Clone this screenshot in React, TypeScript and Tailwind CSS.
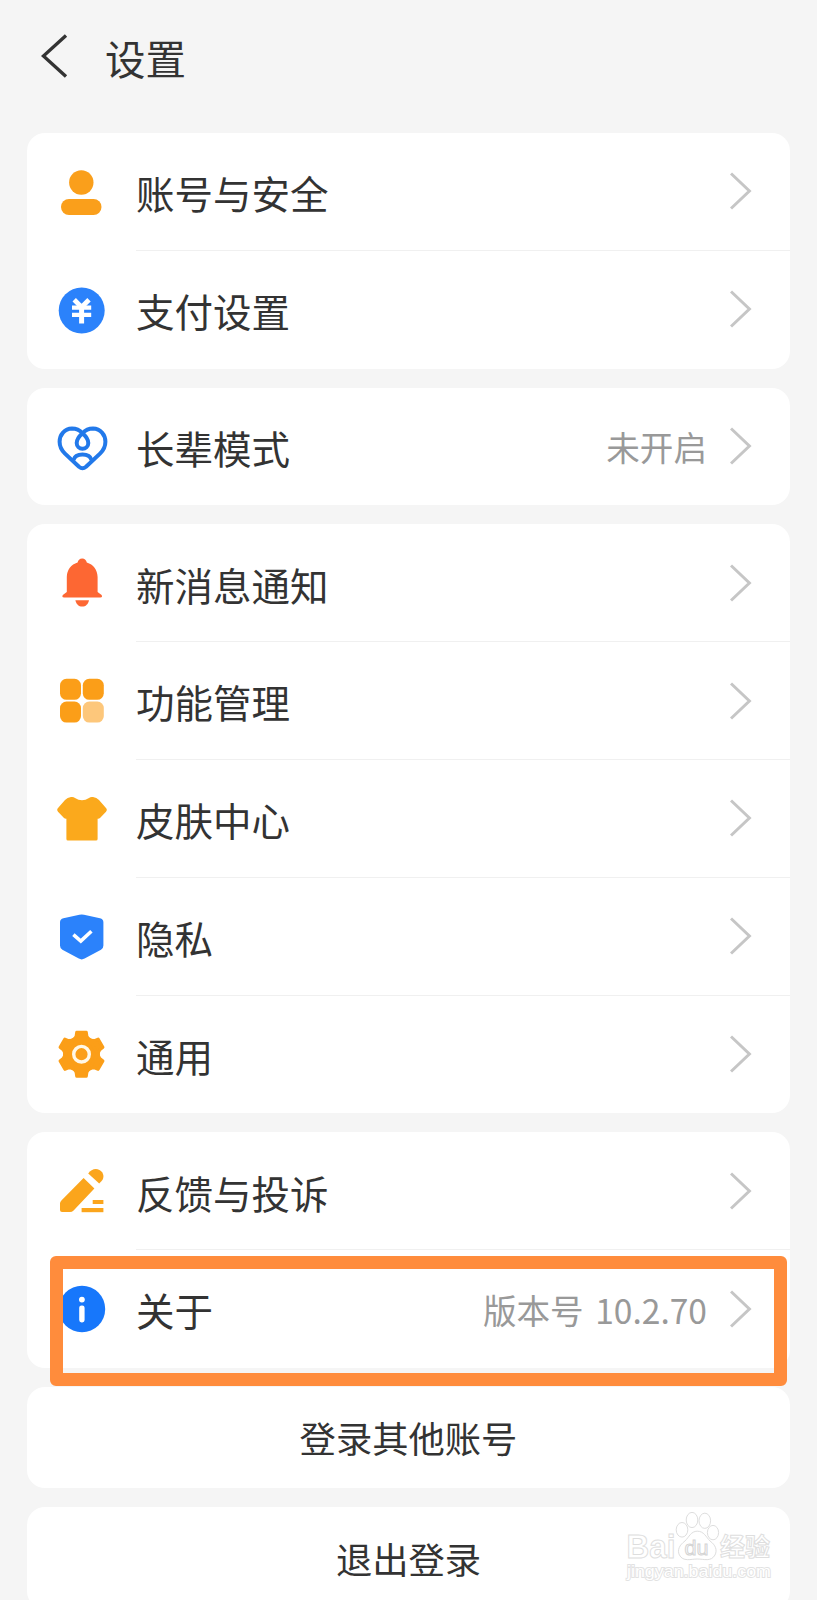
import type { ReactNode } from 'react'

interface SettingItem {
  label: string
  icon: ReactNode
  value?: string
}

function Icon({ children }: { children: ReactNode }) {
  return (
    <svg className="w-14 h-14 shrink-0" viewBox="0 0 56 56" fill="none">
      {children}
    </svg>
  )
}

const UserIcon = (
  <Icon>
    <g fill="#fa9f1b">
      <circle cx="27.3" cy="18.5" r="12.2" />
      <rect x="7" y="35" width="40.5" height="16" rx="8" />
    </g>
  </Icon>
)

const PayIcon = (
  <Icon>
    <circle cx="27.7" cy="28.5" r="23" fill="#2b82fb" />
    <path d="M20.2 17.8 L27.6 25.2 L35 17.8" stroke="#fff" strokeWidth="4.8" />
    <path d="M18 25.6 H37.2 M18 32.8 H37.2" stroke="#fff" strokeWidth="4.2" />
    <path d="M27.6 24 V41.5" stroke="#fff" strokeWidth="5" />
  </Icon>
)

const HeartIcon = (
  <Icon>
    <g stroke="#2279ea" strokeWidth="4" strokeLinejoin="round">
      <path d="M28.5 15.3 C25 11.5 21.5 10.6 18 10.6 C10.5 10.8 5.6 16.6 5.6 23.8 C5.6 28.6 7.6 32.4 11 35.6 L25 48.8 Q28.5 51.6 32 48.8 L46 35.6 C49.4 32.4 51.4 28.6 51.4 23.8 C51.4 16.6 46.5 10.8 39 10.6 C35.5 10.6 32 11.5 28.5 15.3" />
      <path d="M28.5 15.3 C32.2 18.6 34.3 22 34.3 25 A5.8 5.8 0 0 1 22.7 25 C22.7 22 24.8 18.6 28.5 15.3 Z" />
      <path d="M19.5 42 C21.5 34.8 35.5 34.8 37.5 42" />
    </g>
  </Icon>
)

const BellIcon = (
  <Icon>
    <g fill="#fd6733">
      <path d="M28.2 3.5 C30.8 3.5 32.4 5.2 32.8 7.6 C39.4 9.6 43.4 15 43.6 22 V37 L47.6 40 Q48.8 42.5 46.4 42.5 H10 Q7.6 42.5 8.8 40 L12.8 37 V22 C13 15 17 9.6 23.6 7.6 C24 5.2 25.6 3.5 28.2 3.5 Z" />
      <path d="M21.4 45.2 H35 C34.4 49 31.6 51.6 28.2 51.6 C24.8 51.6 22 49 21.4 45.2 Z" />
    </g>
  </Icon>
)

const GridIcon = (
  <Icon>
    <g fill="#fb9e18">
      <rect x="6" y="5.8" width="21" height="21" rx="6.5" />
      <rect x="28.8" y="5.8" width="21" height="21" rx="6.5" />
      <rect x="6" y="28.6" width="21" height="21" rx="6.5" />
      <rect x="28.8" y="28.6" width="21" height="21" rx="6.5" fill="#fdc77b" />
    </g>
  </Icon>
)

const ShirtIcon = (
  <Icon>
    <path
      d="M17 6 Q19.5 5.6 21 7 Q28 11.6 35 7 Q36.5 5.6 39 6 Q42.6 6.4 45 9 L52.4 17.6 Q53.6 19.2 52 20.8 L46 27 Q45 28 43.6 27.8 V48 Q43.6 49.5 42 49.5 H14 Q12.4 49.5 12.4 48 V27.8 Q11 28 10 27 L4 20.8 Q2.4 19.2 3.6 17.6 L11 9 Q13.4 6.4 17 6 Z"
      fill="#fba91c"
    />
  </Icon>
)

const ShieldIcon = (
  <Icon>
    <path
      d="M25.4 5.8 Q27.7 5 30 5.8 L46 9.2 Q49.4 10 49.4 13.2 V36.4 Q49.4 39.2 47 40.8 L30.6 49.6 Q27.7 51.2 24.8 49.6 L8.4 40.8 Q6 39.2 6 36.4 V13.2 Q6 10 9.4 9.2 Z"
      fill="#2b82fb"
    />
    <path d="M19.4 25.6 L26.8 32 L37.4 22.2" stroke="#fff" strokeWidth="3.6" />
  </Icon>
)

const GearIcon = (
  <Icon>
    <g transform="translate(27.5 28.2)">
      <g fill="#fb9e18" stroke="#fb9e18" strokeWidth="3" strokeLinejoin="round">
        <circle r="17" />
        {[0, 60, 120, 180, 240, 300].map((angle) => (
          <path key={angle} d="M-8 -14 L-5.4 -18 L-4.8 -22 H4.8 L5.4 -18 L8 -14 Z" transform={`rotate(${angle})`} />
        ))}
      </g>
      <circle r="7.8" stroke="#fff8e8" strokeWidth="3.4" />
    </g>
  </Icon>
)

const PencilIcon = (
  <Icon>
    <g fill="#fba51c">
      <path d="M29.6 15 L40.4 25.4 L19.6 47.4 Q18 49 16 49 H8 Q6 49 6 47 V40.6 Q6 38.8 7.4 37.4 Z" />
      <path d="M34.2 10.4 C37 6.6 41.4 4.8 45.4 7 C50 9.6 50.6 14.6 47.6 18 L45.2 20.6 Z" />
      <rect x="38.7" y="37" width="10.7" height="4" />
      <rect x="27.6" y="45" width="21.8" height="4.2" />
    </g>
  </Icon>
)

const InfoIcon = (
  <Icon>
    <circle cx="28" cy="28" r="23.2" fill="#1777fb" />
    <circle cx="27.9" cy="18.6" r="2.9" fill="#fff" />
    <rect x="25.2" y="24.4" width="5.4" height="17" rx="2.4" fill="#fff" />
  </Icon>
)

const groups: SettingItem[][] = [
  [
    { label: '账号与安全', icon: UserIcon },
    { label: '支付设置', icon: PayIcon },
  ],
  [{ label: '长辈模式', icon: HeartIcon, value: '未开启' }],
  [
    { label: '新消息通知', icon: BellIcon },
    { label: '功能管理', icon: GridIcon },
    { label: '皮肤中心', icon: ShirtIcon },
    { label: '隐私', icon: ShieldIcon },
    { label: '通用', icon: GearIcon },
  ],
  [
    { label: '反馈与投诉', icon: PencilIcon },
    { label: '关于', icon: InfoIcon, value: '版本号 10.2.70' },
  ],
]

function SettingRow({ item, last }: { item: SettingItem; last: boolean }) {
  return (
    <div className="flex items-center h-[117.8px] pl-[27px]">
      {item.icon}
      <div
        className={`flex flex-1 items-center h-full ml-[26px] pr-[38px] border-b ${
          last ? 'border-transparent' : 'border-[#f0f0f0]'
        }`}
      >
        <span className="flex-1 pt-0.5 text-[38.5px] leading-none text-[#333]">{item.label}</span>
        {item.value && (
          <span className="pt-0.5 text-[33.6px] leading-none [word-spacing:4px] text-[#999]">{item.value}</span>
        )}
        <svg className="w-[22px] h-[38px] ml-[23px] shrink-0" viewBox="0 0 22 38" fill="none">
          <path d="M1 1.5 L19.4 19 L1 36.5" stroke="#c6c6c6" strokeWidth="3" />
        </svg>
      </div>
    </div>
  )
}

function Watermark() {
  return (
    <svg
      className="absolute left-[620px] top-[1505px] w-[160px] h-[84px]"
      viewBox="0 0 160 84"
      fill="#fff"
      stroke="#dedede"
      strokeWidth="1"
    >
      <text x="6.5" y="53" fontSize="34" fontWeight="700" textLength="49" lengthAdjust="spacingAndGlyphs" fontFamily="Liberation Sans, sans-serif">
        Bai
      </text>
      <ellipse cx="62" cy="24.8" rx="5.8" ry="7.3" />
      <ellipse cx="72" cy="15" rx="5.8" ry="7.6" />
      <ellipse cx="84.8" cy="15.8" rx="5.8" ry="7.6" />
      <ellipse cx="93" cy="27.6" rx="5.6" ry="7.2" />
      <path d="M77.3 26.2 C84 26.2 86 32 90 36 C95.5 40 97.5 45 95 50 C91 57 84 54 77.3 54 C71 54 63 57 59.4 50 C57 45 59.5 40 65 36 C69 32 71 26.2 77.3 26.2 Z" />
      <text x="64.5" y="49.6" fontSize="21" textLength="24" lengthAdjust="spacingAndGlyphs" stroke="#d4d4d4" fontFamily="Liberation Sans, sans-serif">
        du
      </text>
      <text x="100" y="51" fontSize="25" fontWeight="700" fontFamily="Noto Sans CJK SC, sans-serif">
        经验
      </text>
      <text
        x="7"
        y="71.5"
        fontSize="17"
        stroke="#e2e2e2"
        strokeWidth="1.8"
        textLength="144"
        lengthAdjust="spacingAndGlyphs"
        paintOrder="stroke"
        fontFamily="Liberation Sans, sans-serif"
      >
        jingyan.baidu.com
      </text>
    </svg>
  )
}

export default function App() {
  return (
    <div className="relative w-full h-[1600px] overflow-hidden bg-[#f5f5f5] font-['Noto_Sans_CJK_SC',sans-serif]">
      {/* Header */}
      <header className="flex items-center h-[113px] pl-[41px]">
        <svg className="w-[27px] h-[44px] -mt-0.5" viewBox="0 0 27 44" fill="none">
          <path d="M25 1.5 L2.4 22 L25 42.5" stroke="#333" strokeWidth="3.4" />
        </svg>
        <h1 className="ml-[37px] mt-[3px] text-[40.5px] leading-none text-[#333]">设置</h1>
      </header>

      {/* Setting groups */}
      <main className="flex flex-col gap-[19px] px-[27px] pt-5">
        {groups.map((items, i) => (
          <section key={i} className="rounded-[18px] bg-white">
            {items.map((item, j) => (
              <SettingRow key={item.label} item={item} last={j === items.length - 1} />
            ))}
          </section>
        ))}
        <button className="h-[101px] rounded-[18px] bg-white text-[36.3px] leading-none text-[#333]">登录其他账号</button>
        <button className="h-[102px] rounded-[18px] bg-white text-[36.3px] leading-none text-[#333]">退出登录</button>
      </main>

      {/* Highlight around the version row */}
      <div className="absolute left-[50px] top-[1256px] w-[737px] h-[130px] rounded-md border-[13.5px] border-[#ff8c3c]" />

      <Watermark />
    </div>
  )
}
